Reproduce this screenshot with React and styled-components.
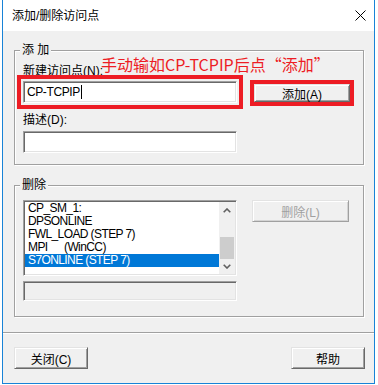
import React from 'react';
import styled, { createGlobalStyle } from 'styled-components';

const GlobalStyle = createGlobalStyle`
  html, body {
    margin: 0;
    padding: 0;
    background: #fff;
  }
  body {
    font-family: "Liberation Sans", "Noto Sans CJK SC", sans-serif;
    font-size: 12px;
    color: #000;
  }
`;

const Window = styled.div`
  box-sizing: border-box;
  margin-left: 2px;
  width: 373px;
  height: 384px;
  border: 1px solid #1883d7;
  border-top: none;
  background: #f0f0f0;
  display: flex;
  flex-direction: column;
`;

const TitleBar = styled.div`
  height: 31px;
  flex: none;
  background: #fff;
  display: flex;
  align-items: center;
  justify-content: space-between;
  padding: 0 8px 0 9px;
`;

const Title = styled.span`
  font-size: 12px;
  line-height: 14px;
`;

const Content = styled.div`
  display: flex;
  flex-direction: column;
  padding: 19px 10px 0 11px;
`;

const Group = styled.section`
  position: relative;
  border: 1px solid #a0a0a0;
  box-shadow: inset 1px 1px #fff, 1px 1px #fff;
  margin-top: ${p => p.$top || 0}px;
  padding: ${p => p.$pad};
  display: flex;
  flex-direction: column;
`;

const Legend = styled.span`
  position: absolute;
  top: -8px;
  left: 5px;
  padding: 0 2px;
  background: #f0f0f0;
  line-height: 14px;
`;

const Note = styled.span`
  position: absolute;
  top: 3px;
  left: 86px;
  font-family: "Noto Sans CJK SC", sans-serif;
  font-size: 16px;
  line-height: 20px;
  color: #ed1c24;
  white-space: nowrap;
`;

const FieldLabel = styled.div`
  line-height: 14px;
  margin-top: ${p => p.$top || 0}px;
`;

const Row = styled.div`
  display: flex;
  align-items: flex-start;
  gap: ${p => p.$gap}px;
  margin-top: ${p => p.$top || 0}px;
`;

const Sunken = styled.div`
  box-sizing: border-box;
  width: 214px;
  height: ${p => p.$h}px;
  margin-top: ${p => p.$top || 0}px;
  border: 1px solid;
  border-color: #a0a0a0 #fff #fff #a0a0a0;
  box-shadow: inset 1px 1px #696969, inset -1px -1px #e3e3e3;
  background: ${p => (p.$gray ? '#f0f0f0' : '#fff')};
`;

const TextBox = styled(Sunken)`
  display: flex;
  align-items: center;
  padding-left: 3px;
  letter-spacing: -0.4px;
  outline: ${p => (p.$mark ? '4px solid #ed1c24' : 'none')};
  outline-offset: 2px;
`;

const Caret = styled.span`
  display: inline-block;
  width: 1px;
  height: 14px;
  background: #000;
  margin-left: 1px;
`;

const ListBox = styled(Sunken)`
  display: flex;
  padding: 1px;
  letter-spacing: -0.6px;
`;

const Items = styled.div`
  flex: 1;
  display: flex;
  flex-direction: column;
`;

const Item = styled.div`
  height: 13px;
  line-height: 13px;
  padding-left: 3px;
  white-space: nowrap;
  background: ${p => (p.$selected ? '#0078d7' : 'transparent')};
  color: ${p => (p.$selected ? '#fff' : '#000')};
`;

const Tab = styled.span`
  display: inline-block;
  width: 36px;
`;

const ScrollBar = styled.div`
  width: 16px;
  background: #f0f0f0;
  display: flex;
  flex-direction: column;
`;

const ScrollArrow = styled.div`
  height: ${p => p.$h}px;
  display: flex;
  align-items: center;
  justify-content: center;
`;

const Track = styled.div`
  flex: 1;
  display: flex;
  flex-direction: column;
  justify-content: flex-end;
  padding: 0 1px;
`;

const Thumb = styled.div`
  height: 22px;
  background: #cdcdcd;
`;

const Button = styled.button`
  box-sizing: border-box;
  width: ${p => p.$w || 74}px;
  height: ${p => p.$h || 22}px;
  margin: 0;
  margin-top: ${p => p.$top || 0}px;
  padding: 0;
  font-family: "Liberation Sans", "Noto Sans CJK SC", sans-serif;
  font-size: 12px;
  color: #000;
  background: #f0f0f0;
  border: 1px solid;
  border-color: #e3e3e3 #696969 #696969 #e3e3e3;
  box-shadow: inset 1px 1px #fff, inset -1px -1px #a0a0a0;
  outline: ${p => (p.$mark ? '4px solid #ed1c24' : 'none')};
  outline-offset: 0;

  &:disabled {
    color: #a0a0a0;
    border-color: #e3e3e3 #a0a0a0 #a0a0a0 #e3e3e3;
    box-shadow: inset 1px 1px #fff, inset -1px -1px #d4d4d4;
  }
`;

const Divider = styled.div`
  margin-top: 15px;
  height: 1px;
  background: #a0a0a0;
  border-bottom: 1px solid #fff;
`;

const Footer = styled.div`
  display: flex;
  justify-content: space-between;
  padding: 13px 9px 0 11px;
`;

const Chevron = ({ up }) => (
  <svg width="8" height="5" viewBox="0 0 8 5">
    <path
      d={up ? 'M0.7 4.3 L4 1 L7.3 4.3' : 'M0.7 0.7 L4 4 L7.3 0.7'}
      fill="none"
      stroke="#606060"
      strokeWidth="1.6"
    />
  </svg>
);

const CloseIcon = () => (
  <svg width="11" height="11" viewBox="0 0 11 11">
    <path d="M0.5 0.5 L10.5 10.5 M10.5 0.5 L0.5 10.5" stroke="#000" strokeWidth="1" />
  </svg>
);

const items = ['CP_SM_1:', 'DPSONLINE', 'FWL_LOAD (STEP 7)'];

export default function App() {
  return (
    <>
      <GlobalStyle />
      <Window>
        <TitleBar>
          <Title>添加/删除访问点</Title>
          <CloseIcon />
        </TitleBar>

        <Content>
          <Group $pad="13px 0 11px 8px">
            <Legend>添 加</Legend>
            <Note>手动输如CP-TCPIP后点“添加”</Note>
            <FieldLabel>新建访问点(N):</FieldLabel>
            <Row $gap={17} $top={3}>
              <TextBox $h={22} $mark>
                CP-TCPIP
                <Caret />
              </TextBox>
              <Button $w={96} $h={18} $top={3} $mark>
                添加(A)
              </Button>
            </Row>
            <FieldLabel $top={10}>描述(D):</FieldLabel>
            <TextBox $h={22} $top={4} />
          </Group>

          <Group $top={20} $pad="14px 0 15px 8px">
            <Legend>删除</Legend>
            <Row $gap={15}>
              <ListBox $h={76}>
                <Items>
                  {items.map(t => (
                    <Item key={t}>{t}</Item>
                  ))}
                  <Item>
                    <Tab>MPI</Tab>(WinCC)
                  </Item>
                  <Item $selected>S7ONLINE (STEP 7)</Item>
                </Items>
                <ScrollBar>
                  <ScrollArrow $h={17}>
                    <Chevron up />
                  </ScrollArrow>
                  <Track>
                    <Thumb />
                  </Track>
                  <ScrollArrow $h={15}>
                    <Chevron />
                  </ScrollArrow>
                </ScrollBar>
              </ListBox>
              <Button $w={97} disabled>
                删除(L)
              </Button>
            </Row>
            <Sunken $h={20} $top={5} $gray />
          </Group>
        </Content>

        <Divider />

        <Footer>
          <Button>关闭(C)</Button>
          <Button>帮助</Button>
        </Footer>
      </Window>
    </>
  );
}
